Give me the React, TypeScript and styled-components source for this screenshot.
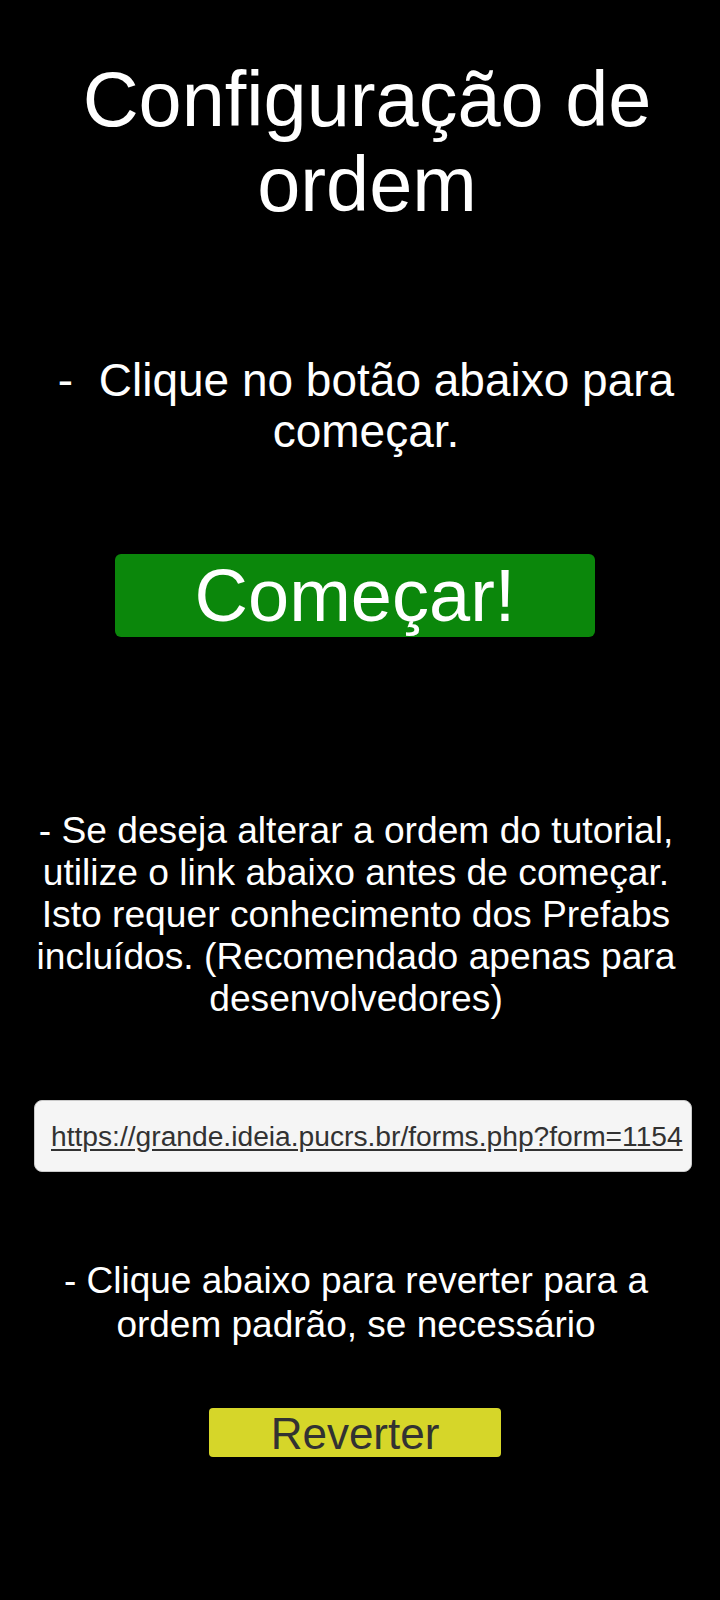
import styled, { createGlobalStyle } from 'styled-components';

const GlobalStyle = createGlobalStyle`
  html, body {
    margin: 0;
    padding: 0;
    background: #000;
  }
  body {
    font-family: 'Liberation Sans', Arial, sans-serif;
    color: #fff;
  }
`;

// --- layout ---
const Page = styled.div`
  width: 720px;
  min-height: 1600px;
  background: #000;
  display: flex;
  flex-direction: column;
  align-items: flex-start;
`;

const Title = styled.h1`
  width: 660px;
  margin: 57px 0 0 37px;
  font-size: 77.5px;
  line-height: 85px;
  font-weight: 400;
  text-align: center;
`;

const Text = styled.p<{ $size: number; $line: number; $top: number; $left: number; $width: number }>`
  width: ${p => p.$width}px;
  margin: ${p => p.$top}px 0 0 ${p => p.$left}px;
  font-size: ${p => p.$size}px;
  line-height: ${p => p.$line}px;
  text-align: center;
  white-space: pre-wrap;
`;

const StartButton = styled.button`
  width: 480px;
  height: 83px;
  margin: 97px 0 0 115px;
  padding: 0;
  border: none;
  border-radius: 6px;
  background: #0b870b;
  color: #fff;
  font-family: inherit;
  font-size: 74px;
  line-height: 83px;
  cursor: pointer;
`;

const LinkBox = styled.div`
  width: 658px;
  height: 72px;
  margin: 81px 0 0 34px;
  box-sizing: border-box;
  padding-left: 16px;
  display: flex;
  align-items: center;
  background: #f5f5f5;
  border: 1px solid #c9c9c9;
  border-radius: 8px;
  overflow: hidden;
  white-space: nowrap;

  a {
    color: #323232;
    font-size: 28.2px;
    text-decoration: underline;
    text-underline-offset: 3px;
  }
`;

const RevertButton = styled.button`
  width: 292px;
  height: 49px;
  margin: 61px 0 0 209px;
  padding: 0;
  border: none;
  border-radius: 4px;
  background: #d6d629;
  color: #323232;
  font-family: inherit;
  font-size: 44px;
  line-height: 52px;
  cursor: pointer;
`;

export default function App() {
  return (
    <>
      <GlobalStyle />
      <Page>
        <Title>Configuração de ordem</Title>

        <Text $size={46} $line={51} $top={128} $left={36} $width={660}>
          {'-  Clique no botão abaixo para começar.'}
        </Text>

        <StartButton>Começar!</StartButton>

        <Text $size={37.2} $line={42} $top={172} $left={21} $width={670}>
          - Se deseja alterar a ordem do tutorial, utilize o link abaixo antes de começar.
          Isto requer conhecimento dos Prefabs incluídos. (Recomendado apenas para desenvolvedores)
        </Text>

        <LinkBox>
          <a href="#">https://grande.ideia.pucrs.br/forms.php?form=1154</a>
        </LinkBox>

        <Text $size={37} $line={44} $top={87} $left={26} $width={660}>
          - Clique abaixo para reverter para a ordem padrão, se necessário
        </Text>

        <RevertButton>Reverter</RevertButton>
      </Page>
    </>
  );
}
